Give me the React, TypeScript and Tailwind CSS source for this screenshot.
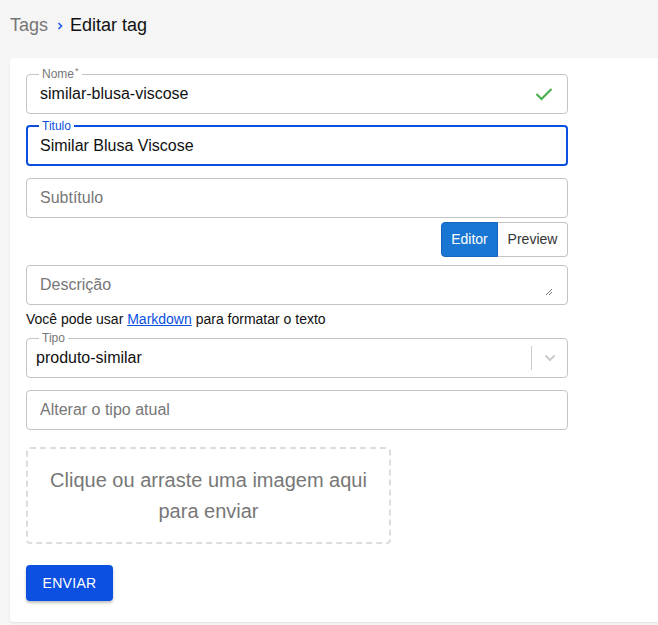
import React from 'react';

const font = { fontFamily: '"Liberation Sans", Arial, sans-serif' };

interface OutlinedProps {
  label: string;
  required?: boolean;
  focused?: boolean;
  children: React.ReactNode;
}

const Outlined: React.FC<OutlinedProps> = ({ label, required, focused, children }) => {
  return (
    <div className="relative h-[40px] w-[542px]">
      <fieldset
        className={
          focused
            ? 'absolute inset-0 m-0 rounded-[4px] border-2 border-[#0a4fe0] px-[11px] pointer-events-none'
            : 'absolute inset-0 m-0 rounded-[4px] border border-[#c4c4c4] px-[12px] pointer-events-none'
        }
        style={{ top: -6, bottom: 0 }}
      >
        <legend className={focused ? 'px-[3px] text-[12px] leading-[12px] text-[#0a4fe0]' : 'px-[3px] text-[12px] leading-[12px] text-[#777]'}>
          {label}
          {required && <sup className="ml-[1px] text-[9px]">*</sup>}
        </legend>
      </fieldset>
      {children}
    </div>
  );
};

const Plain: React.FC<{ placeholder: string }> = ({ placeholder }) => (
  <div className="flex h-[40px] w-[542px] items-center rounded-[4px] border border-[#c4c4c4] px-[13px] text-[16px] text-[#777]">
    {placeholder}
  </div>
);

export default function App() {
  return (
    <div className="min-h-[625px] overflow-hidden bg-[#f5f5f5] text-[#111]" style={font}>
      <div className="flex h-[50px] items-center pl-[10px] text-[18px]">
        <span className="text-[#757575]">Tags</span>
        <svg width="6" height="8" viewBox="0 0 6 8" className="ml-[9px] mr-[7px] mt-[1px]">
          <path d="M1.5 1 L4.5 4 L1.5 7" fill="none" stroke="#1a5ae8" strokeWidth="1.6" />
        </svg>
        <span className="text-[#111]">Editar tag</span>
      </div>

      <div className="ml-[10px] mt-[8px] w-[660px] rounded-[4px] bg-white px-[16px] pb-[21px] pt-[16px] shadow-[0_1px_2px_rgba(0,0,0,0.08)]">
        <Outlined label="Nome" required>
          <div className="flex h-full items-center justify-between pl-[14px] pr-[15px] text-[16px] text-[#111]">
            <span>similar-blusa-viscose</span>
            <svg width="18" height="14" viewBox="0 0 18 14">
              <path d="M1.5 7 L6.5 12 L16.5 2" fill="none" stroke="#4caf50" strokeWidth="2.2" />
            </svg>
          </div>
        </Outlined>

        <div className="mt-[12px]">
          <Outlined label="Titulo" focused>
            <div className="flex h-full items-center pl-[14px] text-[16px] text-[#111]">Similar Blusa Viscose</div>
          </Outlined>
        </div>

        <div className="mt-[12px]">
          <Plain placeholder="Subtítulo" />
        </div>

        <div className="mt-[4px] flex w-[542px] justify-end">
          <div className="flex h-[35px] text-[14px]">
            <button className="w-[57px] rounded-l-[4px] border border-[#1565c0] bg-[#1976d2] text-white">Editor</button>
            <button className="w-[70px] rounded-r-[4px] border border-l-0 border-[#c4c4c4] bg-white text-[#333]">Preview</button>
          </div>
        </div>

        <div className="relative mt-[8px] flex h-[40px] w-[542px] items-center rounded-[4px] border border-[#c4c4c4] px-[13px] text-[16px] text-[#777]">
          Descrição
          <svg width="8" height="8" viewBox="0 0 8 8" className="absolute bottom-[8px] right-[14px]">
            <path d="M1 7 L7 1 M4 7 L7 4" stroke="#555" strokeWidth="0.8" />
          </svg>
        </div>

        <div className="flex h-[28px] items-center text-[14px] text-[#111]">
          <span>
            Você pode usar{' '}
            <a className="text-[#0a4fe0] underline" href="#">Markdown</a> para formatar o texto
          </span>
        </div>

        <div className="mt-[5px]">
          <Outlined label="Tipo">
            <div className="flex h-full items-center">
              <span className="flex-1 pl-[10px] text-[16px] text-[#111]">produto-similar</span>
              <span className="h-[24px] w-px bg-[#ccc]" />
              <span className="flex w-[36px] justify-center">
                <svg width="12" height="8" viewBox="0 0 12 8">
                  <path d="M1.5 1.5 L6 6 L10.5 1.5" fill="none" stroke="#ccc" strokeWidth="2" />
                </svg>
              </span>
            </div>
          </Outlined>
        </div>

        <div className="mt-[12px]">
          <Plain placeholder="Alterar o tipo atual" />
        </div>

        <div className="mt-[17px] flex h-[97px] w-[365px] items-center justify-center rounded-[4px] border-2 border-dashed border-[#dddddd] px-[16px] text-center text-[20px] leading-[31px] text-[#777]">
          Clique ou arraste uma imagem aqui para enviar
        </div>

        <button className="mt-[21px] h-[36px] w-[87px] rounded-[4px] bg-[#0b50e0] text-[14px] tracking-[0.3px] text-white shadow-[0_2px_3px_rgba(0,0,0,0.25)]">
          ENVIAR
        </button>
      </div>
    </div>
  );
}
